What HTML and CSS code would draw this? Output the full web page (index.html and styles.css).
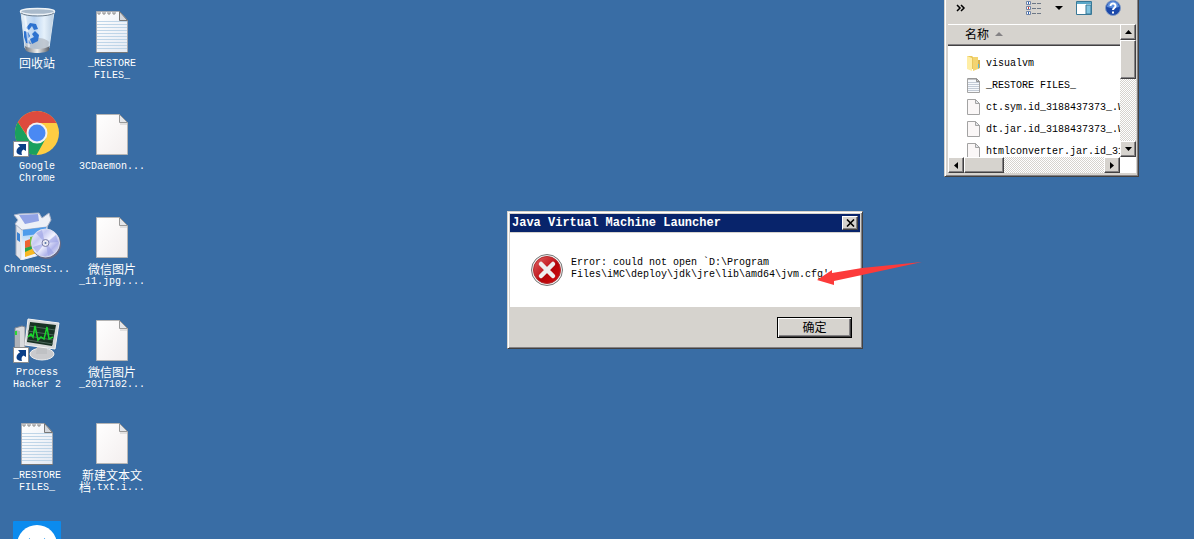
FILE: index.html
```html
<!DOCTYPE html>
<html lang="zh-CN">
<head>
  <meta charset="UTF-8">
  <meta name="viewport" content="width=device-width, initial-scale=1.0">
  <title>Java Virtual Machine Launcher</title>
  <link rel="stylesheet" href="styles.css">
</head>
<body>
  <!-- shared icons -->
  <svg class="defs" aria-hidden="true">
    <defs>
      <linearGradient id="paper" x1="0" y1="0" x2="1" y2="1">
        <stop offset="0" stop-color="#fff"/><stop offset="1" stop-color="#f3eeee"/>
      </linearGradient>
      <linearGradient id="notePaper" x1="0" y1="0" x2="1" y2="1">
        <stop offset="0" stop-color="#fff"/><stop offset="1" stop-color="#e3e9f3"/>
      </linearGradient>
      <symbol id="file" viewBox="0 0 48 48">
        <path d="M8.500 5.500h23l8 8v32h-31z" fill="url(#paper)" stroke="#b5b5b5"/>
        <path d="M31.500 5.500v8h8z" fill="#e4e6ea" stroke="#999"/>
        <path d="M32 15h7" stroke="#ccc"/>
      </symbol>
      <symbol id="note" viewBox="0 0 48 48">
        <path d="M8.500 5.500h23l8 9v32h-31z" fill="url(#notePaper)" stroke="#a2a7b0"/>
        <path d="M9 15.500h30M9 18.500h30M9 21.500h30M9 24.500h30M9 27.500h30M9 30.500h30M9 33.500h30M9 36.500h30M9 39.500h30M9 42.500h30" stroke="#bfd5e8"/>
        <path d="M10 6v2h2v-2M15 6v2h2v-2M20 6v2h2v-2M25 6v2h2v-2" fill="none" stroke="#888"/>
        <path d="M31.500 5.500v9h8z" fill="#d4d7dc" stroke="#777"/>
        <path d="M8 46.500h32" stroke="#777"/>
      </symbol>
      <symbol id="fileSmall" viewBox="0 0 16 16">
        <path d="M1.500.500h8l4 4v11h-12z" fill="#faf7f7" stroke="#a3a3a3"/>
        <path d="M9.500.500v4h4z" fill="#e4e6ea" stroke="#a3a3a3"/>
      </symbol>
      <symbol id="noteSmall" viewBox="0 0 16 16">
        <path d="M1.500 1.500h9l3 3v11h-12z" fill="#f7f9fc" stroke="#a3a3a3"/>
        <path d="M2 5.500h11M2 7.500h11M2 9.500h11M2 11.500h11M2 13.500h11" stroke="#c3cbd6"/>
        <path d="M3 1v2M5 1v2M7 1v2M9 1v2" stroke="#8d8d8d"/>
        <path d="M10.500 1.500v3h3z" fill="#ccc" stroke="#909090"/>
      </symbol>
      <symbol id="shortcut" viewBox="0 0 16 16">
        <path d="M.5.500h15v15H.5z" fill="#fff" stroke="#8c8c8c"/>
        <path d="M5 3h8v7l-2.500-1.500C8.500 9.500 8 11.500 9 14 5.500 14 3.500 12.500 3.500 10.500 3.500 8 5 6.500 7 5.500z" fill="#0b3f87"/>
      </symbol>
    </defs>
  </svg>

  <main class="desktop">
    <button class="shortcut" type="button">
      <svg class="icon" viewBox="0 0 48 48" aria-hidden="true">
        <defs>
          <linearGradient id="glass"><stop offset="0" stop-color="#e6f1fa"/><stop offset=".4" stop-color="#b9d3f0"/><stop offset=".7" stop-color="#e6f1fb"/><stop offset="1" stop-color="#b8cce0"/></linearGradient>
          <linearGradient id="binBase"><stop offset="0" stop-color="#6d737b"/><stop offset=".5" stop-color="#eee"/><stop offset="1" stop-color="#555a62"/></linearGradient>
        </defs>
        <path d="M8 6l4 36c2 5 22 5 24 0l5-36z" fill="url(#glass)" stroke="#d7e4ef"/>
        <path d="M12 37c6-7 20-6 24-1l-1 7c-4 4-19 4-22 0z" fill="#b1b8c0" opacity=".7"/>
        <path d="M12 40c5 4 20 4 24.500 0l-.5 4c-2 4-22 4-23.500 0z" fill="url(#binBase)"/>
        <ellipse cx="24.500" cy="5.500" rx="17" ry="3" fill="#a9bacb" stroke="#eef3f7" stroke-width="1.500"/>
        <path d="M8 7c4 4 29 4 33 0" fill="none" stroke="#70808f"/>
        <path d="M13 22l4-5 6 1 2 5-4 1-2-4-3 4zM11 25l4 1 2 4-2 3 3 5-5-1-2-6zM22 25l4 4-1 6-6 3-2-5 4-2-2-3z" fill="#2d72cf"/>
        <path d="M12 10l4 31" stroke="#fff" stroke-width="2" opacity=".6"/>
      </svg>
      <span class="label"><span class="cjk">回收站</span></span>
    </button>
    <button class="shortcut" type="button">
      <svg class="icon" viewBox="0 0 48 48" aria-hidden="true">
        <circle cx="24" cy="24" r="22" fill="#ffcd42"/>
        <path d="M4.900 13l10.500 16 5 5 12.600-5L23.500 46A22 22 0 0 1 4.900 13z" fill="#1aa05d"/>
        <path d="M4.900 13A22 22 0 0 1 43.600 14H24L14 26.500z" fill="#dd4b3e"/>
        <circle cx="24" cy="24" r="10.500" fill="#f3f3f3"/>
        <circle cx="24" cy="24" r="8.500" fill="#4a89f3"/>
        <use href="#shortcut" x="0" y="32" width="16" height="16"/>
      </svg>
      <span class="label">Google<br>Chrome</span>
    </button>
    <button class="shortcut" type="button">
      <svg class="icon" viewBox="0 0 48 48" aria-hidden="true">
        <defs>
          <linearGradient id="disc" x1="0" y1="0" x2="1" y2="1"><stop offset="0" stop-color="#fff"/><stop offset=".3" stop-color="#c6c9f2"/><stop offset=".5" stop-color="#f2f3ff"/><stop offset=".72" stop-color="#b0b4ea"/><stop offset="1" stop-color="#f3f3f8"/></linearGradient>
          <linearGradient id="boxFront" x1="0" y1="0" x2="0" y2="1"><stop offset="0" stop-color="#78b7f4"/><stop offset=".5" stop-color="#dceafb"/><stop offset="1" stop-color="#f7f8ff"/></linearGradient>
        </defs>
        <path d="M3 12l6 5-1 31-5-5z" fill="#e3e5ec" stroke="#a9aebb"/>
        <path d="M9 16l25-4v29L8 48z" fill="url(#boxFront)" stroke="#e9eef5"/>
        <path d="M1 3l5-1 20-1 3 5 7-5 2 7-4 7-25 3-7-6 3-4z" fill="#edf0f7" stroke="#aab3c7"/>
        <path d="M6 3l19-1 1 7-14 3z" fill="#91a3e6"/>
        <path d="M10 18l23-3v6l-23 3z" fill="#509ceb"/>
        <path d="M12 29l8-3v9l-8 1z" fill="#ed6333"/><path d="M17 25l10-2v8l-10 3z" fill="#79be45"/><path d="M12 36l7-2v6l-7 1z" fill="#27a449"/><path d="M12 40l9-4 3 5-12 4z" fill="#f7b824"/>
        <path d="M4 20l3 2v8l-3-2z" fill="#3c83d3"/>
        <circle cx="33.500" cy="32.500" r="14.500" fill="#646986"/>
        <circle cx="32.500" cy="31" r="14" fill="url(#disc)" stroke="#dadded"/>
        <path d="M32 31l-9-10 6-3zM33 31l10-8 2 7zM32 31l-8 10-4-6zM33 31l8 10-6 3z" fill="#9aa0e4" opacity=".6"/>
        <circle cx="32.500" cy="31" r="3.500" fill="#e9e9f2" stroke="#787ca8"/><circle cx="32.500" cy="31" r="1" fill="#5674a8"/>
      </svg>
      <span class="label">ChromeSt...</span>
    </button>
    <button class="shortcut" type="button">
      <svg class="icon" viewBox="0 0 48 48" aria-hidden="true">
        <path d="M2 13l7-2 3 1v27l-5 3-5-4z" fill="#d9dadd" stroke="#858991"/>
        <path d="M3 15l4 1v23l-4-3z" fill="#aeb2b8"/><path d="M3 16v4" stroke="#2dd934" stroke-width="2"/>
        <ellipse cx="29" cy="39" rx="12" ry="6" fill="#c9cacd" stroke="#eee"/>
        <path d="M24 31h10v8H23z" fill="#bfc1c4"/>
        <path d="M15 4l31 4-4 26-30-4z" fill="#d5d7d8" stroke="#f4f4f4"/>
        <path d="M17 7l26 3-4 21-25-4z" fill="#183124"/>
        <path d="M16 11l26 4M15 16l26 4M15 21l25 4M15 25l25 4" stroke="#4c665a"/>
        <path d="M15 22l3-3 2 3 2-11 3 14 3-3 3 2 3-12 2 12 4-2" fill="none" stroke="#1ad52d" stroke-width="1.500"/>
        <use href="#shortcut" x="0" y="32" width="16" height="16"/>
      </svg>
      <span class="label">Process<br>Hacker 2</span>
    </button>
    <button class="shortcut" type="button">
      <svg class="icon" aria-hidden="true"><use href="#note"/></svg>
      <span class="label">_RESTORE<br>FILES_</span>
    </button>
    <button class="shortcut" type="button" aria-label="TeamViewer">
      <svg class="icon" viewBox="0 0 48 48" aria-hidden="true">
        <rect width="48" height="48" rx="1" fill="#0b8bee"/>
        <circle cx="24" cy="24" r="20" fill="#fff"/>
        <path d="M8 24l9-7v4h14v-4l9 7-9 7v-4H17v4z" fill="#0b8bee"/>
      </svg>
    </button>

    <button class="shortcut" type="button">
      <svg class="icon" aria-hidden="true"><use href="#note"/></svg>
      <span class="label">_RESTORE<br>FILES_</span>
    </button>
    <button class="shortcut" type="button">
      <svg class="icon" aria-hidden="true"><use href="#file"/></svg>
      <span class="label">3CDaemon...</span>
    </button>
    <button class="shortcut" type="button">
      <svg class="icon" aria-hidden="true"><use href="#file"/></svg>
      <span class="label"><span class="cjk">微信图片</span><br>_11.jpg....</span>
    </button>
    <button class="shortcut" type="button">
      <svg class="icon" aria-hidden="true"><use href="#file"/></svg>
      <span class="label"><span class="cjk">微信图片</span><br>_2017102...</span>
    </button>
    <button class="shortcut" type="button">
      <svg class="icon" aria-hidden="true"><use href="#file"/></svg>
      <span class="label"><span class="cjk">新建文本文</span><br><span class="cjk">档</span>.txt.i...</span>
    </button>
  </main>

  <section class="window explorer" aria-label="Explorer">
    <div class="toolbar">
      <button class="tool more" type="button" aria-label="More">
        <svg width="10" height="8" viewBox="0 0 10 8"><path d="M1 1l3 3-3 3M5 1l3 3-3 3" fill="none" stroke="#000" stroke-width="1.500"/></svg>
      </button>
      <button class="tool" type="button" aria-label="View">
        <svg width="16" height="14" viewBox="0 0 16 14">
          <path d="M.5.500h4v3h-4zM.5 5.500h4v3h-4zM.5 10.500h4v3h-4z" fill="#fff" stroke="#7184a5"/>
          <path d="M2 2h1" stroke="#2a62b8" stroke-width="2"/><path d="M2 7h1" stroke="#c33" stroke-width="2"/><path d="M2 12h1" stroke="#2a62b8" stroke-width="2"/>
          <path d="M6 2.500h4m1 0h4M6 7.500h4m1 0h4M6 12.500h4m1 0h4" stroke="#6d7886"/>
        </svg>
      </button>
      <button class="tool" type="button" aria-label="View options">
        <svg width="8" height="4" viewBox="0 0 8 4"><path d="M0 0h8L4 4z"/></svg>
      </button>
      <button class="tool" type="button" aria-label="Preview pane">
        <svg width="16" height="14" viewBox="0 0 16 14"><path d="M.5.500h15v13H.5z" fill="#fff" stroke="#397897"/><path d="M1 2h14" stroke="#5ca8c8" stroke-width="2"/><path d="M10 4h5v9h-5z" fill="#83c4df" stroke="#397897"/></svg>
      </button>
      <button class="tool" type="button" aria-label="Help">
        <svg width="16" height="16" viewBox="0 0 16 16"><circle cx="8" cy="8" r="7.500" fill="#1b48a9" stroke="#829bc5"/><path d="M2 7a6 6 0 0 1 12 0q-6 2-12 0" fill="#5f8fdc"/><path d="M5.500 6c0-3.500 5.500-3.200 5 .2C10.300 8 8 8 8 10" fill="none" stroke="#fff" stroke-width="2"/><path d="M7 11.500h2v2H7z" fill="#fff"/></svg>
      </button>
    </div>
    <div class="listing">
      <div class="viewport">
        <table class="files">
          <thead>
            <tr><th><span class="cjk">名称</span><svg class="sort" width="8" height="4" viewBox="0 0 8 4" aria-hidden="true"><path d="M4 0l4 4H0z" fill="#848284"/></svg></th></tr>
          </thead>
          <tbody>
            <tr><td><svg class="small" viewBox="0 0 16 16" aria-hidden="true"><path d="M1 1h5l1 1h5v12H1z" fill="#e9c65b"/><path d="M1 1l5 2v13l-5-2z" fill="#ffeea5"/><path d="M7 2h5v12l-5 2z" fill="#f3d471"/><path d="M12 5h2v8l-2 1z" fill="#d6b04c"/><path d="M12.500 9v4" stroke="#58b9e6"/></svg>visualvm</td></tr>
            <tr><td><svg class="small" aria-hidden="true"><use href="#noteSmall"/></svg>_RESTORE FILES_</td></tr>
            <tr><td><svg class="small" aria-hidden="true"><use href="#fileSmall"/></svg>ct.sym.id_3188437373_.W</td></tr>
            <tr><td><svg class="small" aria-hidden="true"><use href="#fileSmall"/></svg>dt.jar.id_3188437373_.W</td></tr>
            <tr><td><svg class="small" aria-hidden="true"><use href="#fileSmall"/></svg>htmlconverter.jar.id_31</td></tr>
          </tbody>
        </table>
      </div>
      <div class="scroll vertical">
        <button class="raised" type="button" aria-label="Scroll up"><svg width="7" height="4" viewBox="0 0 7 4"><path d="M3.500 0L7 4H0z"/></svg></button>
        <div class="thumb raised"></div>
        <button class="raised end" type="button" aria-label="Scroll down"><svg width="7" height="4" viewBox="0 0 7 4"><path d="M0 0h7L3.500 4z"/></svg></button>
      </div>
      <div class="scroll horizontal">
        <button class="raised" type="button" aria-label="Scroll left"><svg width="4" height="7" viewBox="0 0 4 7"><path d="M4 0v7L0 3.500z"/></svg></button>
        <div class="thumb raised"></div>
        <button class="raised end" type="button" aria-label="Scroll right"><svg width="4" height="7" viewBox="0 0 4 7"><path d="M0 0l4 3.500L0 7z"/></svg></button>
      </div>
    </div>
  </section>

  <section class="window dialog" role="alertdialog" aria-labelledby="dialogTitle">
    <header class="titlebar">
      <h1 id="dialogTitle">Java Virtual Machine Launcher</h1>
      <button class="raised close" type="button" aria-label="Close">
        <svg width="9" height="8" viewBox="0 0 9 8"><path d="M1 .5l7 7M8 .5l-7 7" stroke="#000" stroke-width="1.600"/></svg>
      </button>
    </header>
    <div class="message">
      <svg class="error" width="32" height="32" viewBox="0 0 32 32" aria-hidden="true">
        <defs><linearGradient id="red" x1="0" y1="0" x2="1" y2="1"><stop offset="0" stop-color="#df6666"/><stop offset=".45" stop-color="#c51d23"/><stop offset=".55" stop-color="#b20408"/><stop offset="1" stop-color="#d80e11"/></linearGradient></defs>
        <circle cx="16" cy="16" r="15.500" fill="#eee" stroke="#777"/>
        <circle cx="16" cy="16" r="13.500" fill="url(#red)" stroke="#b52a2d"/>
        <path d="M10 10l12 12M22 10L10 22" stroke="#eee" stroke-width="4.500" stroke-linecap="round"/>
      </svg>
      <p>Error: could not open `D:\Program<br>Files\iMC\deploy\jdk\jre\lib\amd64\jvm.cfg'</p>
    </div>
    <footer class="actions">
      <button class="ok" type="button"><span class="cjk">确定</span></button>
    </footer>
    <svg class="arrow" width="106" height="24" viewBox="0 0 106 24" aria-hidden="true">
      <path d="M0 18L15 8v3l30-5 60-6-60 13-28 6v4z" fill="#fc3a3a"/>
    </svg>
  </section>
</body>
</html>
```

FILE: styles.css
```css
* {
  box-sizing: border-box;
}

body {
  margin: 0;
  min-height: 100vh;
  position: relative;
  overflow: hidden;
  background: #396da5;
  color: #000;
  font-family: "Liberation Mono", "Noto Sans CJK SC", monospace;
  font-size: 10px;
  line-height: 12px;
}

button {
  margin: 0;
  padding: 0;
  border: 0;
  background: none;
  color: inherit;
  font: inherit;
}

svg {
  display: block;
  flex: none;
}

.defs {
  position: absolute;
  width: 0;
  height: 0;
}

.cjk {
  display: inline-block;
  height: 12px;
  font-family: "Noto Sans CJK SC", sans-serif;
  font-size: 12px;
  line-height: 10px;
  vertical-align: top;
}

/* desktop icons */
.desktop {
  display: grid;
  grid-template-rows: repeat(6, 103px);
  grid-auto-columns: 74px;
  grid-auto-flow: column;
  column-gap: 1px;
  height: 100vh;
  padding-top: 6px;
  overflow: hidden;
}

.shortcut {
  display: flex;
  flex-direction: column;
  align-items: center;
  gap: 4px;
  color: #fff;
}

.icon {
  width: 48px;
  height: 48px;
}

.label {
  white-space: nowrap;
}

/* windows */
.window {
  position: absolute;
  background: #d6d3ce;
  border: 1px solid;
  border-color: #d6d3ce #424142 #424142 #d6d3ce;
  box-shadow: inset 1px 1px #fff, inset -1px -1px #848284;
}

.raised {
  display: flex;
  align-items: center;
  justify-content: center;
  background: #d6d3ce;
  border: 1px solid;
  border-color: #fff #424142 #424142 #fff;
  box-shadow: inset -1px -1px #848284;
}

.explorer {
  top: -4px;
  right: 55px;
  width: 195px;
  padding: 2px 2px 3px 3px;
}

.toolbar {
  display: flex;
  align-items: center;
  gap: 13px;
  height: 25px;
  padding: 0 15px 7px 8px;
}

.more {
  margin-right: auto;
}

.listing {
  display: grid;
  grid-template-columns: minmax(0, 1fr) 16px;
  grid-template-rows: 133px 16px;
  background: #fff;
}

.viewport {
  overflow: hidden;
}

.files {
  width: 100%;
  border-collapse: separate;
  border-spacing: 0;
  white-space: nowrap;
}

.files th {
  height: 22px;
  padding: 0 0 0 17px;
  background: #d6d3ce;
  border-top: 1px solid #fff;
  border-bottom: 1px solid #424142;
  box-shadow: inset 0 -1px #848284;
  font-weight: normal;
  text-align: left;
}

.files tbody::before {
  content: "";
  display: block;
  height: 6px;
}

.files td {
  height: 22px;
  padding: 0 0 0 18px;
}

.sort {
  display: inline-block;
  margin-left: 6px;
  vertical-align: middle;
}

.small {
  display: inline-block;
  width: 16px;
  height: 16px;
  margin-right: 4px;
  vertical-align: middle;
}

.scroll {
  display: flex;
  background: repeating-conic-gradient(#d6d3ce 0 25%, #fff 0 50%) 0 0 / 2px 2px;
}

.scroll button {
  width: 16px;
  height: 16px;
}

.vertical {
  flex-direction: column;
}

.vertical .thumb {
  height: 39px;
}

.vertical .end {
  margin-top: auto;
}

.horizontal .thumb {
  width: 40px;
}

.horizontal .end {
  margin-left: auto;
}

/* error dialog */
.dialog {
  top: 211px;
  left: 507px;
  width: 356px;
  padding: 2px;
}

.titlebar {
  display: flex;
  align-items: center;
  justify-content: space-between;
  height: 18px;
  padding: 0 2px;
  background: #08246b;
  color: #fff;
}

.titlebar h1 {
  margin: 0;
  font-size: 12px;
  line-height: 12px;
}

.close {
  width: 16px;
  height: 14px;
}

.message {
  display: flex;
  gap: 8px;
  height: 74px;
  margin-top: 1px;
  padding: 21px 21px 0;
  background: #fff;
}

.message p {
  margin: 3px 0 0;
  white-space: nowrap;
}

.actions {
  display: flex;
  justify-content: flex-end;
  padding: 10px 8px 8px;
}

.ok {
  width: 75px;
  height: 21px;
  background: #d6d3ce;
  border: 1px solid #000;
  box-shadow: inset 1px 1px #fff, inset -1px -1px #424142, inset -2px -2px #848284;
}

/* pointer drawn over the message */
.arrow {
  position: absolute;
  top: 50px;
  left: 309px;
}
```
